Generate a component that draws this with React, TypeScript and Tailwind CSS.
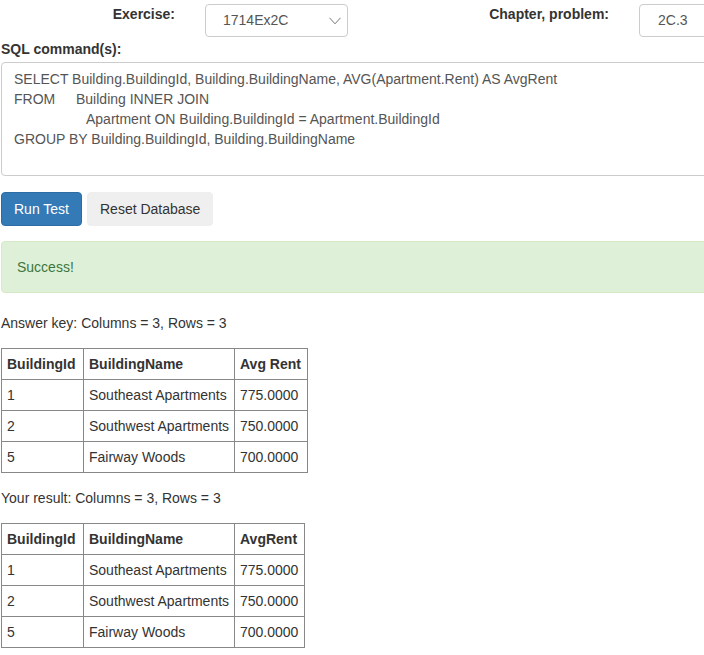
import React from 'react';

type Row = { id: string; name: string; rent: string };

const rows: Row[] = [
  { id: '1', name: 'Southeast Apartments', rent: '775.0000' },
  { id: '2', name: 'Southwest Apartments', rent: '750.0000' },
  { id: '5', name: 'Fairway Woods', rent: '700.0000' },
];

const cell = 'border border-[#888] px-[5px] py-[5px] text-left whitespace-nowrap overflow-visible';

const ResultTable: React.FC<{ rentHeader: string; wide?: boolean }> = ({ rentHeader, wide }) => (
  <table
    className={
      wide
        ? 'table-fixed w-[307px] border-collapse text-[14px] leading-5 text-[#333]'
        : 'table-fixed w-[304px] border-collapse text-[14px] leading-5 text-[#333]'
    }
  >
    <colgroup>
      <col className="w-[82px]" />
      <col className="w-[151px]" />
      <col />
    </colgroup>
    <thead>
      <tr>
        <th className={`${cell} font-bold`}>BuildingId</th>
        <th className={`${cell} font-bold`}>BuildingName</th>
        <th className={`${cell} font-bold`}>{rentHeader}</th>
      </tr>
    </thead>
    <tbody>
      {rows.map((r) => (
        <tr key={r.id}>
          <td className={cell}>{r.id}</td>
          <td className={cell}>{r.name}</td>
          <td className={cell}>{r.rent}</td>
        </tr>
      ))}
    </tbody>
  </table>
);

const App: React.FC = () => {
  return (
    <div className="w-[704px] h-[655px] overflow-hidden bg-white font-['Liberation_Sans',Arial,sans-serif] text-[14px] text-[#333]">
      <div className="w-[760px] pl-[1px]">
        {/* exercise / chapter row */}
        <div className="flex items-start pt-[4px] -ml-[1px]">
          <div className="w-[175px] text-right font-bold leading-5">Exercise:</div>
          <div className="ml-[30px] w-[143px] h-[33px] flex items-center justify-between border border-[#ccc] rounded-[4px] pl-[17px] pr-[6px] text-[#555]">
            <span>1714Ex2C</span>
            <svg width="12" height="8" viewBox="0 0 12 8" fill="none" stroke="#777" strokeWidth="1">
              <path d="M0.5 0.8 L6 6.8 L11.5 0.8" />
            </svg>
          </div>
          <div className="w-[261px] text-right font-bold leading-5">Chapter, problem:</div>
          <div className="ml-[30px] w-[110px] h-[33px] flex items-center border border-[#ccc] rounded-[4px] pl-[18px] text-[#555]">
            2C.3
          </div>
        </div>

        <div className="mt-[2px] mb-[3px] font-bold leading-5">SQL command(s):</div>

        <div className="h-[114px] border border-[#ccc] rounded-[4px] px-[12px] py-[6px] leading-5 text-[#555] whitespace-pre">
          <div>SELECT Building.BuildingId, Building.BuildingName, AVG(Apartment.Rent) AS AvgRent</div>
          <div>
            <span className="inline-block w-[62px]">FROM</span>Building INNER JOIN
          </div>
          <div className="pl-[72px]">Apartment ON Building.BuildingId = Apartment.BuildingId</div>
          <div>GROUP BY Building.BuildingId, Building.BuildingName</div>
        </div>

        <div className="mt-[16px] flex gap-[5px]">
          <button className="h-[34px] px-[12px] rounded-[4px] border border-[#2e6da4] bg-[#337ab7] text-white leading-5">
            Run Test
          </button>
          <button className="h-[34px] px-[12px] rounded-[4px] border border-[#eee] bg-[#efefef] text-[#333] leading-5">
            Reset Database
          </button>
        </div>

        <div className="mt-[15px] mb-[20px] border border-[#d6e9c6] bg-[#dff0d8] rounded-[4px] p-[15px] leading-5 text-[#3c763d]">
          Success!
        </div>

        <p className="leading-5">Answer key: Columns = 3, Rows = 3</p>
        <div className="mt-[15px] mb-[15px]">
          <ResultTable rentHeader="Avg Rent" wide />
        </div>

        <p className="leading-5">Your result: Columns = 3, Rows = 3</p>
        <div className="mt-[15px]">
          <ResultTable rentHeader="AvgRent" />
        </div>
      </div>
    </div>
  );
};

export default App;
